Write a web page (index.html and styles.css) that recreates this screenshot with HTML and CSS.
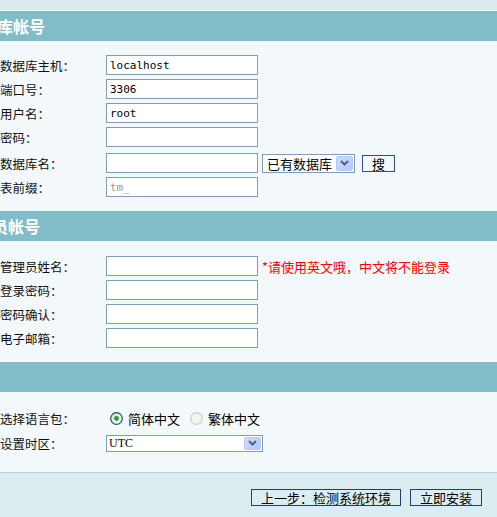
FILE: index.html
```html
<!DOCTYPE html>
<html>
<head>
    <title>安装向导 - 填写配置</title>
<link rel="stylesheet" href="styles.css">
</head>

<body>

    <div class="topbar"></div>

    <!-- 数据库帐号 -->
    <div class="section-title">数据库帐号</div>
    <div class="form-body">
        <div class="row">
            <label>数据库主机：</label>
            <input class="text" type="text" value="localhost">
        </div>
        <div class="row">
            <label>端口号：</label>
            <input class="text" type="text" value="3306">
        </div>
        <div class="row">
            <label>用户名：</label>
            <input class="text" type="text" value="root">
        </div>
        <div class="row">
            <label>密码：</label>
            <input class="text" type="password" value="">
        </div>
        <div class="row row-tall">
            <label>数据库名：</label>
            <input class="text" type="text" value="">
            <div class="fake-select db-select">
                <span class="fake-select-text">已有数据库</span>
                <span class="select-arrow">
                    <svg width="9" height="6" viewBox="0 0 9 6"><path d="M1 1 L4.5 4.5 L8 1" fill="none" stroke="#4d6185" stroke-width="2"/></svg>
                </span>
            </div>
            <button class="small-btn">搜</button>
        </div>
        <div class="row">
            <label>表前缀：</label>
            <input class="text text-grey" type="text" value="tm_">
        </div>
    </div>

    <!-- 管理员帐号 -->
    <div class="section-title title-admin">管理员帐号</div>
    <div class="form-body body-admin">
        <div class="row">
            <label>管理员姓名：</label>
            <input class="text" type="text" value="">
            <span class="warn">*请使用英文哦，中文将不能登录</span>
        </div>
        <div class="row">
            <label>登录密码：</label>
            <input class="text" type="password" value="">
        </div>
        <div class="row">
            <label>密码确认：</label>
            <input class="text" type="password" value="">
        </div>
        <div class="row">
            <label>电子邮箱：</label>
            <input class="text" type="text" value="">
        </div>
    </div>

    <!-- 其他设置 -->
    <div class="section-title"></div>
    <div class="form-body body-other">
        <div class="row">
            <label>选择语言包：</label>
            <span class="radio">
                <svg width="13" height="13" viewBox="0 0 13 13">
                    <defs>
                        <linearGradient id="radioFill" x1="0" y1="0" x2="1" y2="1">
                            <stop offset="0" stop-color="#dcdcd4"/>
                            <stop offset="1" stop-color="#ffffff"/>
                        </linearGradient>
                    </defs>
                    <circle cx="6.5" cy="6.5" r="5.8" fill="url(#radioFill)" stroke="#1c5180" stroke-width="1.2"/>
                    <circle cx="6.5" cy="6.5" r="2.4" fill="#21a421"/>
                </svg>
            </span>
            <span class="radio-text">简体中文</span>
            <span class="radio radio-off">
                <svg width="13" height="13" viewBox="0 0 13 13">
                    <circle cx="6.5" cy="6.5" r="5.8" fill="#f4f5f0" stroke="#cbcbc2" stroke-width="1.2"/>
                </svg>
            </span>
            <span class="radio-text">繁体中文</span>
        </div>
        <div class="row row-tz">
            <label>设置时区：</label>
            <div class="fake-select tz-select">
                <span class="fake-select-text tz-text">UTC</span>
                <span class="select-arrow">
                    <svg width="9" height="6" viewBox="0 0 9 6"><path d="M1 1 L4.5 4.5 L8 1" fill="none" stroke="#4d6185" stroke-width="2"/></svg>
                </span>
            </div>
        </div>
    </div>

    <div class="footer">
        <button class="step-btn btn-prev">上一步：检测系统环境</button>
        <button class="step-btn btn-install">立即安装</button>
    </div>

</body>
</html>
```

FILE: styles.css
```css
/* General Styling */
body {
    margin: 0;
    padding: 0;
    background-color: #f3f9fb;
    font-family: "Noto Sans CJK SC", "DejaVu Sans", sans-serif;
    font-size: 12px;
    color: #000;
    overflow: hidden;
}

.topbar {
    height: 10px;
    background-color: #dbecf1;
    border-bottom: 1px solid #f8fbfc;
}

/* Section headers */
.section-title {
    height: 30px;
    line-height: 30px;
    background-color: #81bdc9;
    color: #fff;
    font-size: 16px;
    font-weight: bold;
    white-space: nowrap;
    overflow: hidden;
    text-indent: -35px;
}

.title-admin {
    text-indent: -40px;
}

/* Form rows */
.form-body {
    padding: 12px 0 12px 0;
}

.body-admin {
    padding-top: 13px;
}

.body-other {
    padding: 14px 0 17px 0;
}

.row {
    display: flex;
    align-items: center;
    height: 24px;
}

.row-tall {
    margin-top: 2px;
}

.row-tz {
    margin-top: 1px;
}

.row label {
    width: 106px;
    flex: none;
    color: #111;
    font-size: 12.5px;
    white-space: nowrap;
}

.text {
    box-sizing: border-box;
    width: 152px;
    height: 20px;
    margin: 0;
    padding: 0 3px;
    border: 1px solid #7f9db9;
    background: #fff;
    font-family: "DejaVu Sans Mono", monospace;
    font-size: 11px;
    color: #000;
    outline: none;
}

.text-grey {
    color: #9e9c8c;
}

/* Select boxes */
.fake-select {
    box-sizing: border-box;
    display: flex;
    align-items: center;
    justify-content: space-between;
    border: 1px solid #7f9db9;
    background: #fff;
    padding: 0 1px 0 4px;
}

.db-select {
    width: 93px;
    height: 19px;
    margin-left: 4px;
    font-size: 13px;
}

.tz-select {
    width: 157px;
    height: 17px;
    padding-left: 2px;
}

.tz-text {
    font-family: "Liberation Serif", serif;
    font-size: 12px;
}

.select-arrow {
    box-sizing: border-box;
    display: flex;
    align-items: center;
    justify-content: center;
    width: 17px;
    height: 15px;
    border: 1px solid #b8cbf6;
    border-radius: 2px;
    background: linear-gradient(135deg, #d0defc, #b2c6f5);
}

.tz-select .select-arrow {
    height: 13px;
}

/* Buttons */
.small-btn {
    box-sizing: border-box;
    width: 33px;
    height: 17px;
    margin-left: 7px;
    padding: 0;
    border: 1px solid #2a4e80;
    background: #f3f9fb;
    font-family: "Noto Sans CJK SC", sans-serif;
    font-size: 13px;
    line-height: 15px;
    color: #000;
}

.warn {
    margin-left: 4px;
    color: #ff0000;
    font-size: 13px;
    white-space: nowrap;
}

/* Radio buttons */
.radio {
    display: flex;
    margin-left: 4px;
}

.radio-off {
    margin-left: 10px;
}

.radio-text {
    margin-left: 5px;
    font-size: 13px;
}

/* Footer */
.footer {
    display: flex;
    justify-content: flex-end;
    gap: 9px;
    height: 45px;
    padding: 16px 15px 0 0;
    box-sizing: border-box;
    background-color: #dbedf1;
    border-top: 1px solid #a9d6e0;
}

.step-btn {
    box-sizing: border-box;
    height: 17px;
    padding: 0;
    border: 1px solid #1c3f74;
    background: #dcedf1;
    font-family: "Noto Sans CJK SC", sans-serif;
    font-size: 13px;
    line-height: 15px;
    color: #000;
}

.btn-prev {
    width: 150px;
}

.btn-install {
    width: 72px;
}
```
